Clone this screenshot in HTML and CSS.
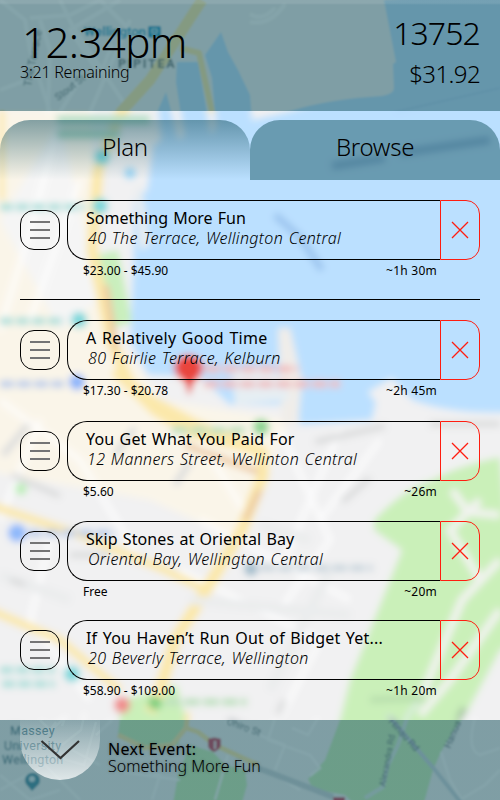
FILE: index.html
```html
<!DOCTYPE html>
<html lang="en">
<head>
<meta charset="utf-8">
<title>Trip Plan</title>
<link rel="stylesheet" href="styles.css">
</head>
<body>
<svg class="map" width="500" height="800" viewBox="0 0 500 800" aria-hidden="true">
  <defs>
    <filter id="soft" x="-5%" y="-5%" width="110%" height="110%"><feGaussianBlur stdDeviation="3.6"/></filter>
    <filter id="slight" x="-5%" y="-5%" width="110%" height="110%"><feGaussianBlur stdDeviation="1"/></filter>
    <clipPath id="middle"><rect y="111" width="500" height="609"/></clipPath>
    <clipPath id="edges"><path d="M0 0H500V111H0ZM0 720H500V800H0Z"/></clipPath>
    <clipPath id="lens"><path d="M20 720H100V740A40 40 0 0 1 20 740Z"/></clipPath>
    <g id="city">
      <rect x="-20" y="-20" width="540" height="840" fill="#f1f1f2"/>
      <path d="M-20 110H90L100 250L120 340L160 400L290 420L240 540L150 500L-20 470Z" fill="#faf5e9"/>
      <path d="M60 120L0 220L60 330L100 300Z" fill="#f5f5f5"/>
      <path d="M384 0L396 62L393 64L394 88Q394 94 382 96Q330 99 290 111L252 120L250 95L238 70L228 52L221 32L205 55L212 78L216 125L211 135L198 62L177 62L176 82L184 135L179 140L166 92L158 110L161 140L153 145L147 190L134 200L133 270L130 340L148 375L200 377L230 405H296L300 425L372 420L376 402L368 392L392 378L412 400Q455 416 520 412V-10Z" fill="#bbe0ff"/>
      <path d="M97 255L118 250L132 322L114 328Z" fill="#c9efbd"/>
      <path d="M141 185L150 245L140 250L135 190Z" fill="#e9edef"/>
      <path d="M278 328H290L302 380L298 425H282Z" fill="#f0ede9"/>
      <path d="M232 372L268 365L285 382L290 400L235 405Z" fill="#e6eef3"/>
      <path d="M500 457Q455 467 432 480Q405 488 374 520L374 530L402 550L350 680L340 720L325 760L308 779L313 789L345 795L360 810H422L433 770L441 752L452 733L467 712L500 650L520 640Z" fill="#caf0b9"/>
      <path d="M500 560L462 600L420 700M480 500L450 530L480 580M500 610L450 680L420 715M452 490L468 512L500 515" fill="none" stroke="#f1f3ef" stroke-width="8"/>
      <path d="M420 700L408 715L398 745L388 765L383 787L365 798" fill="none" stroke="#dcebe4" stroke-width="4"/>
      <path d="M177 685L186 720L178 745L145 747L118 735L122 700Z" fill="#caf0b9"/>
      <path d="M190 745L213 752L225 765L245 770L247 785L240 810H172L178 775Z" fill="#caf0b9"/>
      <g fill="none" stroke="#fff" stroke-width="5" opacity=".8">
        <path d="M60 120L30 230L0 330M80 180L30 320M0 400L80 460L140 560M200 520L350 600M180 570L320 640L280 718M50 540L30 620L90 700M40 420L0 520M280 430L330 540L280 610M340 430L280 570M380 440L320 520M200 440L250 520"/>
      </g>
      <g fill="none" stroke="#fff" stroke-width="4" opacity=".8">
        <path d="M0 0L25 20L30 50L50 112M30 18L70 15L100 0M60 0L72 25L130 112M120 0L70 30L100 75L112 45M100 0L130 30L150 40M40 20L50 50L48 112M0 90L40 75M80 80L60 112M130 20L90 112M250 14Q262 22 275 8M250 22Q270 26 285 4"/>
      </g>
      <g fill="none" stroke="#fff" stroke-width="2.5" opacity=".85">
        <path d="M40 720L50 730L56 722M62 726L65 718L45 735M85 712L81 730L62 745M96 722L84 765L60 758M72 750L100 765M96 735L112 720M0 775L30 800L60 790M0 790L45 765L80 800M130 765L160 775L152 800M110 770L180 780M275 718L268 740L310 755L320 768L310 776M225 722L285 745L275 770M292 728L308 735L318 718M250 760L300 790M475 718Q466 750 480 755L500 748M500 770L485 785L460 800M441 752L450 780L462 800"/>
        <path d="M228 755L215 800"/>
      </g>
      <g fill="none" stroke="#fbe8aa" stroke-linejoin="round">
        <path d="M202 0L150 80L121 112L98 170L92 250L111 340L130 385L155 410L190 432L258 450" stroke-width="11"/>
        <path d="M180 48L199 53L212 112" stroke-width="6"/>
        <path d="M115 370L145 398L195 425L262 452L263 475L242 530L200 600L175 640L160 690L150 712" stroke-width="12"/>
        <path d="M-10 505L80 535L165 570L205 590" stroke-width="8"/>
        <path d="M-10 610L60 640L120 690" stroke-width="8"/>
        <path d="M118 735L145 748L172 745L186 728L188 712M186 728L198 732L215 745L258 765" stroke-width="5"/>
        <path d="M2 110V200" stroke-width="5"/>
      </g>
      <path d="M106 285L116 350M185 445L258 472M245 520L260 490" fill="none" stroke="#ecc9a0" stroke-width="6"/>
      <path d="M0 575L70 600M190 600L350 615M330 570L270 690M260 525L310 540" fill="none" stroke="#eaeced" stroke-width="9"/>
      <g fill="none" stroke="#dadbdc" stroke-width="6">
        <path d="M3 455L28 425M12 475L60 496M115 455L135 428M175 485L190 462M315 442L385 426M342 502L370 478M430 424H500M70 555H110M10 580L25 585M278 715L284 700"/>
      </g>
      <path d="M370 700L425 698" stroke="#b9dfae" stroke-width="7"/>
      <path d="M258 768L284 778L310 788L333 797" fill="none" stroke="#cfd5da" stroke-width="6"/>
      <path d="M388 715L435 770L462 804" fill="none" stroke="#cbd6df" stroke-width="4"/>
      <path d="M275 215L300 237L322 270" fill="none" stroke="#9cc4ee" stroke-width="7"/>
      <path d="M332 166L385 158M400 153L490 140" fill="none" stroke="#8fb5de" stroke-width="8"/>
      <path d="M395 112L500 88" stroke="#a8cff2" stroke-width="1"/>
      <g fill="none" stroke="#a9ded9" stroke-width="7" stroke-dasharray="13 3">
        <path d="M0 207H85M0 321H65M0 670H55M2 684H55"/>
        <path d="M57 120H150M57 134H120" stroke="#b3dec6" stroke-width="9" stroke-dasharray="none"/>
      </g>
      <path d="M0 384H64M28 533H115" stroke="#bccdea" stroke-width="7" stroke-dasharray="14 3"/>
      <path d="M260 568H373" stroke="#cbd6dd" stroke-width="7" stroke-dasharray="15 3"/>
      <path d="M172 430H248M165 702H247" stroke="#bde0be" stroke-width="7" stroke-dasharray="16 3"/>
      <path d="M205 369H298M204 384H340" stroke="#f0bcbd" stroke-width="7" stroke-dasharray="15 3"/>
      <g fill="#7cd8dc">
        <circle cx="102" cy="157" r="8"/><circle cx="100" cy="206" r="8"/><circle cx="79" cy="320" r="8"/><circle cx="72" cy="674" r="8"/>
      </g>
      <circle cx="130" cy="173" r="6" fill="#9ad8f7"/>
      <circle cx="77" cy="382" r="8" fill="#8db5fb"/><circle cx="17" cy="533" r="9" fill="#8db8fb"/>
      <circle cx="251" cy="569" r="7" fill="#a3bdcc"/>
      <circle cx="261" cy="427" r="8" fill="#8bd591"/><circle cx="155" cy="703" r="7" fill="#7fcf80"/><circle cx="21" cy="489" r="6" fill="#bbefb8"/>
      <circle cx="122" cy="705" r="8" fill="#f08d8d"/>
      <path d="M189 396L185 382Q174 376 174 366A15 15 0 0 1 203 366Q203 376 194 382Z" fill="#e9453c"/>
      <path d="M32 791L26 784A7.5 7.5 0 1 1 39 784Z" fill="#4c91a8"/><circle cx="32" cy="779" r="3" fill="#dceaf0"/>
      <path d="M208 739Q214 736 221 739V746Q219 750 214 752Q209 750 208 746Z" fill="#ce4a63"/><path d="M215 741V749" stroke="#fff" stroke-width="1.5"/>
      <path d="M333 797H345V804H333Z" fill="#ce4a63"/>
      <g class="map-text">
        <text x="84" y="36" fill="#199fc9" font-size="13" font-weight="bold">Wellington</text>
        <rect x="148" y="26" width="13" height="12" rx="2" fill="#1c9cc8"/><path d="M152 29H157V33H152ZM152 36H157" fill="none" stroke="#fff"/>
        <text x="118" y="68" fill="#626e74" font-size="12.5" font-weight="bold" letter-spacing="1.7">PIPITEA</text>
        <g fill="#68777d" font-size="10">
          <text transform="translate(31 87) rotate(-79)" font-size="11">The Terrace</text>
          <text transform="translate(58 101) rotate(-38)">Stout St</text>
          <text transform="translate(226 724) rotate(20)">Ohiro St</text>
          <text transform="translate(388 722) rotate(48)" font-size="10">Hinau Rd</text>
          <text transform="translate(385 787) rotate(-79)" font-size="9">Alexandra Rd</text>
          <text transform="translate(450 749) rotate(-67)">Hanua Rd</text>
        </g>
        <g fill="#33687b" font-size="12.5" letter-spacing=".3">
          <text x="10" y="734.5">Massey</text><text x="4" y="749.5">University</text><text x="2" y="764">Wellington</text>
        </g>
      </g>
    </g>
  </defs>
  <g clip-path="url(#middle)"><use href="#city" filter="url(#soft)"/></g>
  <g clip-path="url(#edges)"><use href="#city" filter="url(#slight)"/></g>
  <g clip-path="url(#lens)"><use href="#city"/></g>
</svg>

<main class="screen">
  <header class="status">
    <div class="clock">
      <div class="time">12:34pm</div>
      <div class="remaining">3:21 Remaining</div>
    </div>
    <div class="totals">
      <div class="steps">13752</div>
      <div class="budget">$31.92</div>
    </div>
  </header>

  <nav class="tabs">
    <div class="tab active">Plan</div>
    <div class="tab browse">Browse</div>
  </nav>

  <section class="list">
    <article class="row current">
      <div class="handle"><i></i><i></i><i></i></div>
      <div class="event">
        <div class="card">
          <div class="info"><div class="title t1">Something More Fun</div><div class="address a1">40 The Terrace, Wellington Central</div></div>
          <div class="remove"><svg width="18" height="18" viewBox="0 0 18 18"><path d="M1 1L17 17M17 1L1 17"/></svg></div>
        </div>
        <div class="meta"><span>$23.00 - $45.90</span><span class="span">~1h 30m</span></div>
      </div>
    </article>
    <article class="row">
      <div class="handle"><i></i><i></i><i></i></div>
      <div class="event">
        <div class="card">
          <div class="info"><div class="title t2">A Relatively Good Time</div><div class="address a2">80 Fairlie Terrace, Kelburn</div></div>
          <div class="remove"><svg width="18" height="18" viewBox="0 0 18 18"><path d="M1 1L17 17M17 1L1 17"/></svg></div>
        </div>
        <div class="meta"><span>$17.30 - $20.78</span><span class="span">~2h 45m</span></div>
      </div>
    </article>
    <article class="row third">
      <div class="handle"><i></i><i></i><i></i></div>
      <div class="event">
        <div class="card">
          <div class="info"><div class="title t3">You Get What You Paid For</div><div class="address a3">12 Manners Street, Wellinton Central</div></div>
          <div class="remove"><svg width="18" height="18" viewBox="0 0 18 18"><path d="M1 1L17 17M17 1L1 17"/></svg></div>
        </div>
        <div class="meta"><span>$5.60</span><span class="span">~26m</span></div>
      </div>
    </article>
    <article class="row">
      <div class="handle"><i></i><i></i><i></i></div>
      <div class="event">
        <div class="card">
          <div class="info"><div class="title t4">Skip Stones at Oriental Bay</div><div class="address a4">Oriental Bay, Wellington Central</div></div>
          <div class="remove"><svg width="18" height="18" viewBox="0 0 18 18"><path d="M1 1L17 17M17 1L1 17"/></svg></div>
        </div>
        <div class="meta"><span>Free</span><span class="span">~20m</span></div>
      </div>
    </article>
    <article class="row last">
      <div class="handle"><i></i><i></i><i></i></div>
      <div class="event">
        <div class="card">
          <div class="info"><div class="title t5">If You Haven’t Run Out of Bidget Yet...</div><div class="address a5">20 Beverly Terrace, Wellington</div></div>
          <div class="remove"><svg width="18" height="18" viewBox="0 0 18 18"><path d="M1 1L17 17M17 1L1 17"/></svg></div>
        </div>
        <div class="meta"><span>$58.90 - $109.00</span><span class="span">~1h 20m</span></div>
      </div>
    </article>
  </section>

  <footer class="next">
    <div class="collapse"><svg width="40" height="20" viewBox="0 0 40 20"><path d="M1.5 1L20.5 18L39 1"/></svg></div>
    <div class="next-text"><div class="next-label">Next Event:</div><div class="next-name">Something More Fun</div></div>
  </footer>
</main>
</body>
</html>
```
FILE: styles.css
```css
* { box-sizing: border-box; }
body { margin: 0; width: 500px; height: 800px; overflow: hidden; font-family: "Noto Sans", "Open Sans", sans-serif; color: #000; }
.map { position: absolute; left: 0; top: 0; z-index: -1; }
.map-text { font-family: Roboto, sans-serif; }
.screen { height: 800px; display: flex; flex-direction: column; white-space: nowrap; }

.status { height: 111px; padding: 0 20px; display: flex; justify-content: space-between; background: linear-gradient(rgba(255,255,255,.1) 3px, transparent 5px), rgba(18,78,90,.51); font-weight: 300; }
.time { margin: 20px 0 0 2px; font-size: 42px; line-height: 44px; letter-spacing: -.6px; }
.remaining { font-size: 16px; line-height: 16px; letter-spacing: -.25px; }
.totals { text-align: right; }
.steps { margin-top: 13px; font-size: 32px; line-height: 40px; letter-spacing: -.9px; }
.budget { font-size: 24px; line-height: 41px; letter-spacing: -.6px; }

.tabs { height: 60px; margin-top: 9px; display: flex; }
.tab { flex: 1; display: flex; align-items: center; justify-content: center; padding-bottom: 7px; border-radius: 30px 30px 0 0; font-size: 24px; font-weight: 300; letter-spacing: -.3px; }
.active { background: linear-gradient(rgba(14,76,92,.5), rgba(14,76,92,0)); }
.browse { background: rgba(16,80,92,.48); }

.list { height: 540px; padding: 20px 20px 0; display: flex; flex-direction: column; gap: 20px; }
.row { flex: none; height: 80px; display: flex; gap: 7px; }
.current { height: 100px; border-bottom: 1px solid #000; }
.third { margin-top: 1px; }
.last { margin-top: -1px; }
.handle { width: 40px; height: 40px; margin-top: 10px; border: 1px solid #000; border-radius: 14px; display: flex; flex-direction: column; align-items: center; justify-content: center; gap: 6px; }
.handle i { width: 20px; height: 2px; background: #747475; }
.event { flex: 1; }
.card { height: 60px; display: flex; }
.info { flex: 1; padding: 6px 0 0 18px; border: 1px solid #000; border-right: 0; border-radius: 20px 0 0 20px; }
.title { font-size: 16px; line-height: 22px; font-weight: 400; word-spacing: 1px; }
.address { padding-left: 2px; font-size: 16px; line-height: 19px; font-style: italic; font-weight: 300; word-spacing: 1px; letter-spacing: .35px; }
.t2 { letter-spacing: .3px; }
.t3 { letter-spacing: .16px; }
.t4 { letter-spacing: .08px; }
.t5 { letter-spacing: .2px; }
.a3 { padding-left: 1px; }
.remove { width: 40px; border: 1px solid #ff1d10; border-radius: 0 14px 14px 0; display: flex; align-items: center; justify-content: center; }
.remove path { fill: none; stroke: #ff1d10; stroke-width: 1.3; }
.meta { padding: 1px 43px 0 16px; display: flex; justify-content: space-between; font-size: 12px; line-height: 20px; }
.span { letter-spacing: .25px; }

.next { height: 80px; padding-left: 20px; display: flex; gap: 8px; background: linear-gradient(rgba(18,78,90,.51), rgba(18,78,90,.51)); }
.collapse { width: 80px; height: 60px; display: flex; justify-content: center; padding-top: 20px; border-radius: 0 0 40px 40px; background: linear-gradient(rgba(255,255,255,.08), rgba(255,255,255,.75)); }
.collapse path { fill: none; stroke: #333; stroke-width: 2.2; }
.next-text { padding-top: 21px; font-size: 16px; line-height: 17px; text-shadow: 0 0 3px rgba(0,0,0,.3); }
.next-label { letter-spacing: .28px; }
.next-name { font-weight: 300; }
```
